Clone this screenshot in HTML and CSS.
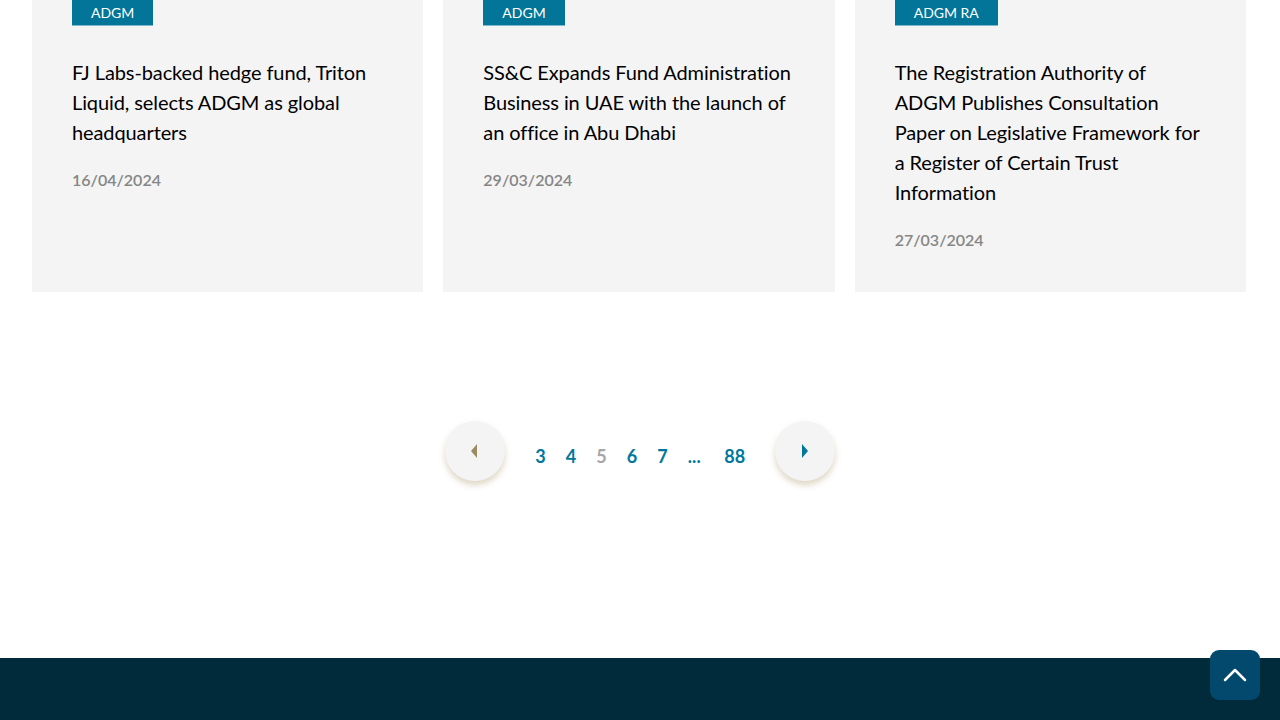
FILE: index.html
```html
<!DOCTYPE html>
<html lang="en">
<head>
<meta charset="utf-8">
<title>News</title>
<link rel="stylesheet" href="styles.css">
</head>
<body>
<main class="page">
  <section class="cards">
    <article class="card">
      <span class="tag">ADGM</span>
      <h3 class="title">FJ Labs-backed hedge fund, Triton Liquid, selects ADGM as global headquarters</h3>
      <p class="date">16/04/2024</p>
    </article>
    <article class="card">
      <span class="tag">ADGM</span>
      <h3 class="title">SS&amp;C Expands Fund Administration Business in UAE with the launch of an office in Abu Dhabi</h3>
      <p class="date">29/03/2024</p>
    </article>
    <article class="card">
      <span class="tag">ADGM RA</span>
      <h3 class="title">The Registration Authority of ADGM Publishes Consultation Paper on Legislative Framework for a Register of Certain Trust Information</h3>
      <p class="date">27/03/2024</p>
    </article>
  </section>
  <nav class="pager">
    <button class="arrow prev" aria-label="Previous"><svg width="8" height="14" viewBox="0 0 8 14"><path d="M6 0 L0 7 L6 14 Z" fill="#9c8a60"/></svg></button>
    <ul class="pages">
      <li><a class="num">3</a></li>
      <li><a class="num">4</a></li>
      <li><span class="num current">5</span></li>
      <li><a class="num">6</a></li>
      <li><a class="num">7</a></li>
      <li><span class="num dots">...</span></li>
      <li><a class="num last">88</a></li>
    </ul>
    <button class="arrow next" aria-label="Next"><svg width="8" height="14" viewBox="0 0 8 14"><path d="M1 0 L7 7 L1 14 Z" fill="#00789c"/></svg></button>
  </nav>
</main>
<footer class="footer"></footer>
<button class="to-top" aria-label="Back to top"><svg width="24" height="24" viewBox="0 0 24 24"><path d="M2 17 L12 7 L22 17" fill="none" stroke="#fff" stroke-width="2.5" stroke-linecap="round" stroke-linejoin="round"/></svg></button>
</body>
</html>
```
FILE: styles.css
```css
* { box-sizing: border-box; }
html, body { margin: 0; padding: 0; }
body {
  font-family: "Lato", "Noto Sans", sans-serif;
  color: #111;
  background: #fff;
  width: 1280px;
  height: 720px;
  overflow: hidden;
  position: relative;
}
.page {
  height: 658px;
  padding: 0 34px 0 32px;
}
.cards {
  display: grid;
  grid-template-columns: repeat(3, 1fr);
  gap: 20px;
}
.card {
  background: #f4f4f4;
  padding: 0 40px 40px;
  display: flex;
  flex-direction: column;
  align-items: flex-start;
}
.tag {
  display: inline-block;
  background: #027598;
  color: #fff;
  font-size: 14px;
  line-height: 25px;
  padding: 0 19px;
  border-bottom: 1px solid #7fb8cb;
}
.title {
  margin: 31px 0 0;
  font-weight: 400;
  font-size: 20px;
  line-height: 30px;
  color: #000;
  letter-spacing: -0.1px;
}
.date {
  margin: 21px 0 0;
  font-size: 16px;
  line-height: 24px;
  font-weight: 600;
  color: #868686;
}
.pager {
  margin-top: 129px;
  padding-left: 2px;
  display: flex;
  justify-content: center;
  align-items: center;
}
.arrow {
  width: 60px;
  height: 60px;
  border-radius: 50%;
  border: none;
  background: #f4f4f4;
  box-shadow: 0 4px 6px rgba(160, 140, 90, 0.35);
  display: flex;
  align-items: center;
  justify-content: center;
  padding: 0;
  flex: none;
}
.pages {
  list-style: none;
  margin: 10px 16px 0 20px;
  padding: 0;
  display: flex;
  align-items: center;
}
.num {
  display: block;
  width: 30.5px;
  text-align: center;
  font-size: 18px;
  font-weight: 700;
  color: #00789c;
  line-height: 24px;
}
.num.current { color: #a6a6a6; }
.num.dots { width: 33px; }
.num.last { width: 48px; }
.footer {
  height: 62px;
  background: #012a3b;
}
.to-top {
  position: absolute;
  right: 20px;
  bottom: 20px;
  width: 50px;
  height: 50px;
  border-radius: 9px;
  border: none;
  background: #03496e;
  display: flex;
  align-items: center;
  justify-content: center;
  padding: 0;
}
```
